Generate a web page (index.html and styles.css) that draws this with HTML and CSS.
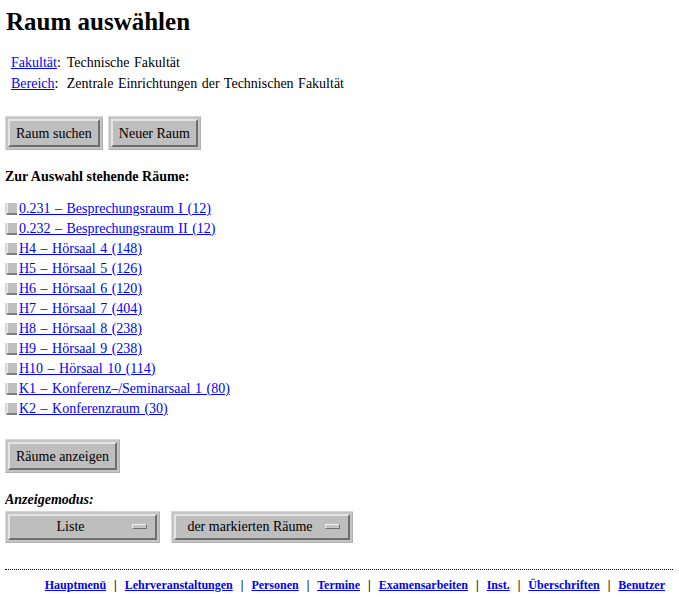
FILE: index.html
```html
<!DOCTYPE html>
<html lang="de">

<head>
    <meta charset="UTF-8">
    <title>Raum auswählen</title>
    <link rel="stylesheet" href="styles.css">
</head>

<body>
    <h1>Raum auswählen</h1>

    <table class="info">
        <tr>
            <td class="key"><a href="#">Fakultät</a>:</td>
            <td>Technische Fakultät</td>
        </tr>
        <tr>
            <td class="key"><a href="#">Bereich</a>:</td>
            <td>Zentrale Einrichtungen der Technischen Fakultät</td>
        </tr>
    </table>

    <div class="actions">
        <span class="frame"><button class="btn">Raum suchen</button></span>
        <span class="frame"><button class="btn">Neuer Raum</button></span>
    </div>

    <h3 class="section">Zur Auswahl stehende Räume:</h3>

    <ul class="rooms">
        <li><span class="chk"></span><a href="#">0.231 – Besprechungsraum I (12)</a></li>
        <li><span class="chk"></span><a href="#">0.232 – Besprechungsraum II (12)</a></li>
        <li><span class="chk"></span><a href="#">H4 – Hörsaal 4 (148)</a></li>
        <li><span class="chk"></span><a href="#">H5 – Hörsaal 5 (126)</a></li>
        <li><span class="chk"></span><a href="#">H6 – Hörsaal 6 (120)</a></li>
        <li><span class="chk"></span><a href="#">H7 – Hörsaal 7 (404)</a></li>
        <li><span class="chk"></span><a href="#">H8 – Hörsaal 8 (238)</a></li>
        <li><span class="chk"></span><a href="#">H9 – Hörsaal 9 (238)</a></li>
        <li><span class="chk"></span><a href="#">H10 – Hörsaal 10 (114)</a></li>
        <li><span class="chk"></span><a href="#">K1 – Konferenz–/Seminarsaal 1 (80)</a></li>
        <li><span class="chk"></span><a href="#">K2 – Konferenzraum (30)</a></li>
    </ul>

    <div class="actions show">
        <span class="frame"><button class="btn">Räume anzeigen</button></span>
    </div>

    <h4 class="mode-label">Anzeigemodus:</h4>
    <div class="mode">
        <span class="frame select-list">
            <span class="option"><span class="label">Liste</span><span class="indicator"></span></span>
        </span>
        <span class="frame select-which">
            <span class="option"><span class="label">der markierten Räume</span><span class="indicator"></span></span>
        </span>
    </div>

    <hr class="rule">

    <div class="footer">
        <a href="#">Hauptmenü</a> | <a href="#">Lehrveranstaltungen</a> | <a href="#">Personen</a> |
        <a href="#">Termine</a> | <a href="#">Examensarbeiten</a> | <a href="#">Inst.</a> |
        <a href="#">Überschriften</a> | <a href="#">Benutzer</a>
    </div>
</body>

</html>
```

FILE: styles.css
```css
body {
    font-family: 'Liberation Serif', 'Times New Roman', serif;
    font-size: 14px;
    line-height: 17px;
    color: #000;
    background: #fff;
    margin: 0 5px;
}

a {
    color: #0000ff;
    text-decoration: underline;
}

h1 {
    font-size: 25px;
    line-height: 30px;
    margin: 7px 0 0 1px;
}

/* Fakultät / Bereich */
.info {
    border-spacing: 0;
    margin: 15px 0 0 2px;
    word-spacing: 1px;
}

.info td {
    padding: 2px 4px 2px 2px;
    line-height: 17px;
}

.info td.key {
    padding: 2px 4px;
}

/* Motif style push buttons */
.actions {
    margin-top: 22px;
    display: flex;
    gap: 5px;
}

.actions.show {
    margin-top: 20px;
}

.frame {
    display: inline-block;
    background: #c4c4c4;
    padding: 3px;
    box-shadow: inset 1px 1px 0 #d6d6d6, inset -1px -1px 0 #b0b0b0;
}

.btn {
    font-family: inherit;
    font-size: 14px;
    line-height: 17px;
    color: #000;
    background: #bebebe;
    padding: 4px 6px 3px;
    margin: 0;
    border: 2px solid;
    border-color: #e4e4e4 #6e6e6e #6e6e6e #e4e4e4;
    display: block;
}

.section {
    font-size: 14px;
    line-height: 17px;
    margin: 18px 0 0;
}

/* room list */
.rooms {
    list-style: none;
    margin: 14px 0 0;
    padding: 0;
}

.rooms li {
    height: 20px;
    line-height: 20px;
    display: flex;
    align-items: center;
    gap: 2px;
    word-spacing: 1px;
}

.chk {
    width: 10px;
    height: 12px;
    background: #c0c0c0;
    border-left: 2px solid #d8d8d8;
    box-shadow: inset 0 -2px 0 #7c7c7c, inset 1px 0 0 #e8e8e8;
    flex: none;
}

.mode-label {
    font-size: 14px;
    font-style: italic;
    line-height: 17px;
    margin: 18px 0 0;
}

/* option menus */
.mode {
    margin-top: 3px;
    display: flex;
    gap: 11px;
}

.option {
    display: flex;
    align-items: center;
    background: #bebebe;
    border: 2px solid;
    border-color: #e4e4e4 #6e6e6e #6e6e6e #e4e4e4;
    padding: 2px 8px 3px 5px;
}

.select-list .option {
    width: 132px;
}

.select-which .option {
    width: 159px;
}

.label {
    flex: 1;
    text-align: center;
}

.indicator {
    width: 13px;
    height: 3px;
    background: #c4c4c4;
    border: 1px solid;
    border-color: #f0f0f0 #6e6e6e #6e6e6e #f0f0f0;
    margin-left: 6px;
}

.rule {
    border: 0;
    border-top: 1px dotted #000;
    margin: 26px -5px 0 0;
    height: 0;
}

.footer {
    font-size: 12px;
    font-weight: bold;
    line-height: 17px;
    text-align: right;
    word-spacing: 5px;
    padding: 7px 9px 0 0;
}
```
